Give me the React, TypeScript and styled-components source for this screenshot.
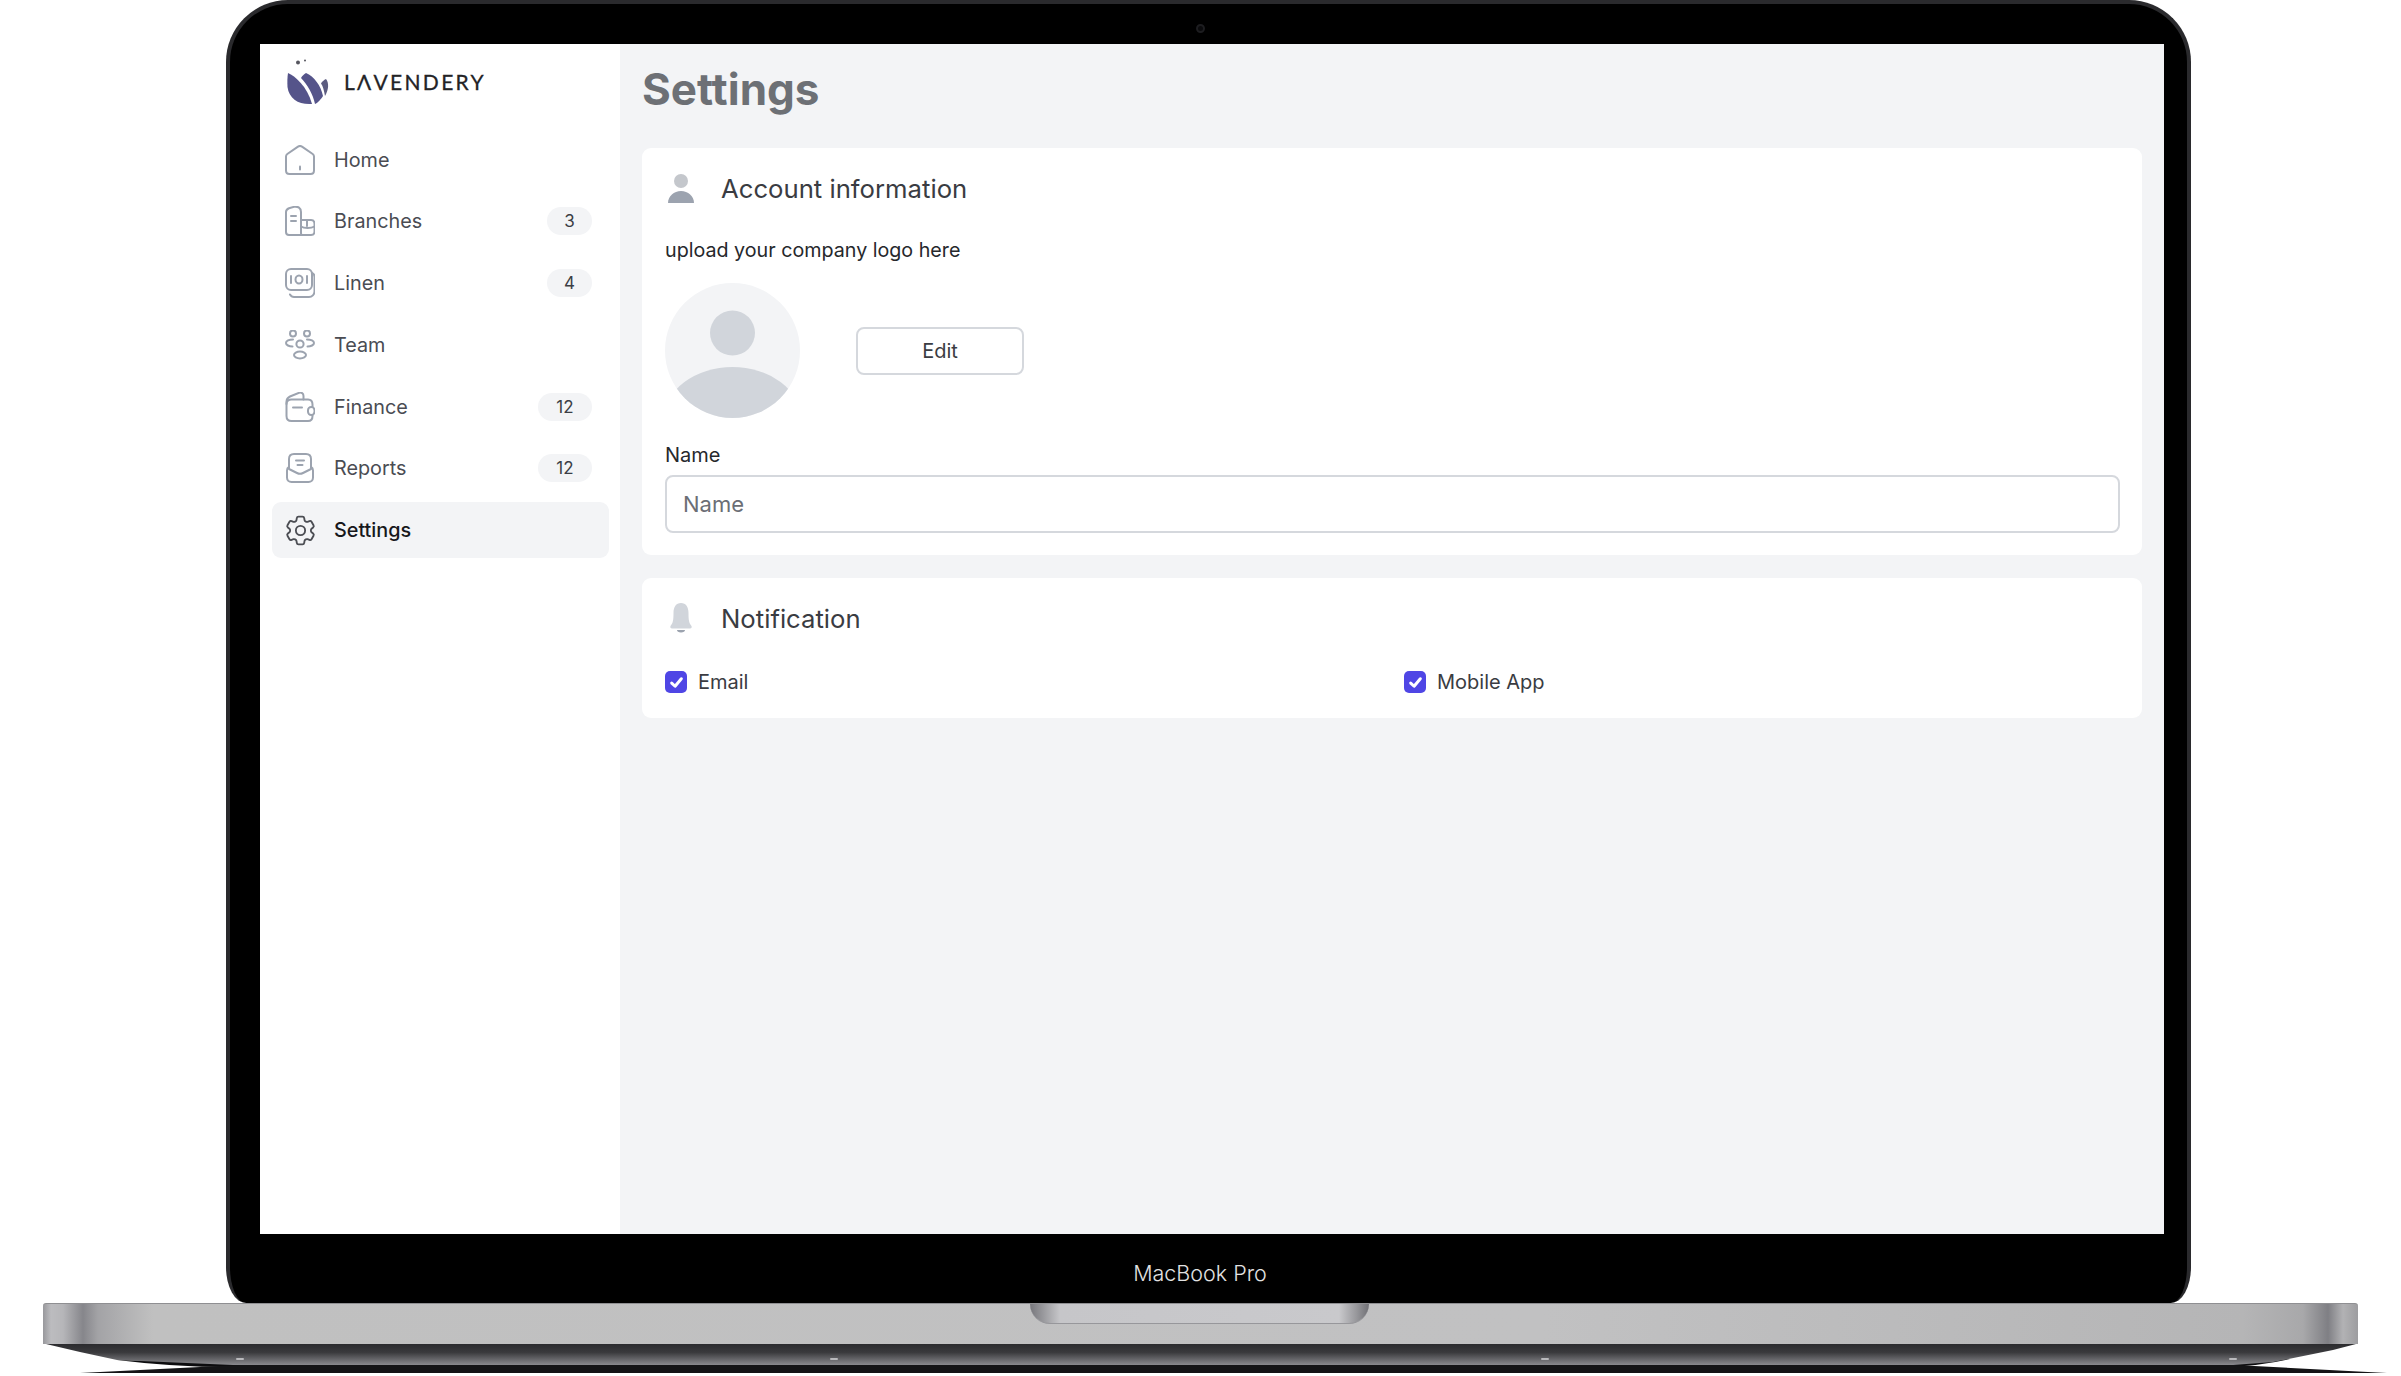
import React from "react";
import styled, { createGlobalStyle } from "styled-components";
import { HiOutlineCog6Tooth } from "react-icons/hi2";

const GlobalStyle = createGlobalStyle`
  html, body {
    margin: 0;
    background: #fff;
    font-family: Inter, "Noto Sans", sans-serif;
  }
  * { box-sizing: border-box; }
`;

const Page = styled.div`
  width: 2401px;
  height: 1376px;
  overflow: hidden;
  background: #fff;
`;

const Lid = styled.div`
  width: 1965px;
  height: 1303px;
  margin-left: 226px;
  padding: 0 23px 0 30px;
  background: #000;
  border: 4px solid #2a2a2d;
  border-bottom: 0;
  border-radius: 62px 62px 20px 20px / 62px 62px 36px 36px;
`;

const TopBezel = styled.div`
  height: 40px;
  padding-right: 24px;
  display: flex;
  align-items: center;
  justify-content: center;
`;

const Camera = styled.div`
  width: 9px;
  height: 9px;
  margin-top: 8px;
  border-radius: 50%;
  background: #0a0a0c;
  border: 2px solid #1d1d20;
`;

const Screen = styled.div`
  height: 1190px;
  display: flex;
  background: #f3f4f6;
`;

const Sidebar = styled.aside`
  width: 360px;
  padding: 0 11px 0 12px;
  background: #fff;
  flex-shrink: 0;
`;

const Brand = styled.div`
  height: 87.5px;
  padding: 14px 0 0 14px;
  display: flex;
  align-items: flex-start;
  gap: 12px;
`;

const Wordmark = styled.span`
  margin-top: 10px;
  font-family: Lato, sans-serif;
  font-size: 21px;
  line-height: 28px;
  letter-spacing: 2.3px;
  -webkit-text-stroke: 0.3px #232326;
  color: #232326;
`;

const Nav = styled.nav`
  display: flex;
  flex-direction: column;
  gap: 5.8px;
`;

const NavItem = styled.a<{ $active?: boolean }>`
  height: 56px;
  padding: 0 17px 0 13px;
  display: flex;
  align-items: center;
  gap: 19px;
  border-radius: 9px;
  font-size: 19.8px;
  font-weight: ${({ $active }) => ($active ? 500 : 400)};
  color: ${({ $active }) => ($active ? "#17181c" : "#4a4c53")};
  background: ${({ $active }) => ($active ? "#f3f4f6" : "transparent")};
`;

const NavIcon = styled.span<{ $active?: boolean }>`
  width: 30px;
  height: 30px;
  flex-shrink: 0;
  color: ${({ $active }) => ($active ? "#4b4d53" : "#9ca3af")};

  svg {
    display: block;
    width: ${({ $active }) => ($active ? "37px" : "30px")};
    height: ${({ $active }) => ($active ? "37px" : "30px")};
    margin: ${({ $active }) => ($active ? "-3.5px" : "0")};
  }
`;

const NavLabel = styled.span`
  flex: 1;
`;

const Badge = styled.span<{ $wide?: boolean }>`
  width: ${({ $wide }) => ($wide ? "54px" : "45px")};
  height: 28px;
  display: flex;
  align-items: center;
  justify-content: center;
  border-radius: 14px;
  background: #f3f4f6;
  color: #3b3e45;
  font-size: 17px;
  font-weight: 400;
`;

const Main = styled.main`
  flex: 1;
  padding: 15px 22px 0;
`;

const Title = styled.h1`
  margin: 0 0 29px;
  font-size: 44px;
  line-height: 60px;
  font-weight: 700;
  color: #6d7075;
`;

const Card = styled.section`
  margin-bottom: 23px;
  padding: 14px 22px 22px 23px;
  background: #fff;
  border-radius: 9px;
`;

const CardHeader = styled.div`
  height: 52px;
  display: flex;
  align-items: center;
  gap: 24px;
  margin-bottom: 22px;
`;

const HeaderIcon = styled.svg`
  width: 30px;
  height: 34px;
  margin-left: 2px;
  flex-shrink: 0;
`;

const CardTitle = styled.h2`
  margin: 0;
  font-size: 25.7px;
  font-weight: 400;
  color: #3a3c42;
`;

const HelpText = styled.p`
  margin: 0 0 19px;
  font-size: 19.7px;
  line-height: 28px;
  font-weight: 400;
  color: #26282c;
`;

const AvatarRow = styled.div`
  display: flex;
  align-items: center;
  gap: 56px;
  margin-bottom: 23px;
`;

const Avatar = styled.svg`
  width: 135px;
  height: 135px;
  display: block;
`;

const EditButton = styled.button`
  width: 168px;
  height: 48px;
  background: #fff;
  border: 2px solid #d5d8dd;
  border-radius: 8px;
  font-family: inherit;
  font-size: 20px;
  font-weight: 400;
  color: #3a3c42;
`;

const FieldLabel = styled.label`
  display: block;
  margin-bottom: 6px;
  font-size: 20px;
  line-height: 28px;
  font-weight: 400;
  color: #26282c;
`;

const TextInput = styled.input`
  display: block;
  width: 100%;
  height: 58px;
  padding: 0 16px;
  background: #fff;
  border: 2px solid #d5d8dd;
  border-radius: 8px;
  outline: none;
  font-family: inherit;
  font-size: 22px;

  &::placeholder {
    color: #6b6e75;
    opacity: 1;
  }
`;

const OptionGrid = styled.div`
  display: grid;
  grid-template-columns: 1fr 1fr;
  column-gap: 23px;
  padding-top: 2px;
`;

const Option = styled.label`
  height: 28px;
  display: flex;
  align-items: center;
  gap: 11px;
  font-size: 20px;
  font-weight: 400;
  color: #3a3c42;
`;

const CheckBox = styled.span`
  width: 22px;
  height: 22px;
  display: flex;
  align-items: center;
  justify-content: center;
  border-radius: 5px;
  background: #4f46e5;

  svg {
    width: 15px;
    height: 15px;
  }
`;

const Chin = styled.div`
  height: 69px;
  padding: 9px 24px 0 0;
  display: flex;
  align-items: center;
  justify-content: center;
  color: #e2e2e2;
  font-size: 21.5px;
  font-weight: 300;
`;

const Base = styled.div`
  position: relative;
  width: 2315px;
  height: 41px;
  margin-left: 43px;
  border-radius: 3px 3px 0 0;
  border-top: 1px solid #8f8f92;
  background: linear-gradient(
    90deg,
    #98989c 0,
    #bcbcbf 8px,
    #b6b6b9 20px,
    #86868b 40px,
    #a3a3a6 55px,
    #c0c0c0 110px,
    #c1c1c2 1500px,
    #b5b5b6 2200px,
    #a8a8aa 2260px,
    #7f7f84 2285px,
    #b2b2b4 2300px,
    #9d9da0 2315px
  );
`;

const Notch = styled.div`
  position: absolute;
  top: 0;
  left: 987px;
  width: 339px;
  height: 20px;
  border-radius: 0 0 24px 24px;
  border-bottom: 1px solid #97979b;
  background: linear-gradient(
    90deg,
    #77777c 0,
    #96969a 12px,
    #c6c6c9 30px,
    #c9c9cc 309px,
    #96969a 327px,
    #707075 339px
  );
`;

const Underside = styled.svg`
  display: block;
  width: 2401px;
  height: 32px;
`;

const navItems = [
  { label: "Home", icon: <HomeIcon /> },
  { label: "Branches", icon: <BranchesIcon />, count: "3" },
  { label: "Linen", icon: <LinenIcon />, count: "4" },
  { label: "Team", icon: <TeamIcon /> },
  { label: "Finance", icon: <FinanceIcon />, count: "12" },
  { label: "Reports", icon: <ReportsIcon />, count: "12" },
];

function LogoMark() {
  return (
    <svg width="46" height="48" viewBox="0 0 46 48">
      <circle cx="12" cy="4.5" r="2" fill="#55555e" />
      <circle cx="19" cy="2.5" r="1" fill="#55555e" />
      <path d="M2 15C9 18 21 28 26 46C13 47 3 41 1.5 29C1.2 24 1.3 20 2 15Z" fill="#55548a" />
      <path d="M20 15C28 18 35 28 37 38C35 41 32 45 29 46C27 36 21 26 15 20C16 18 18 16 20 15Z" fill="#55548a" />
      <path d="M40 21C43 25 43 31 39 38C38 33 37 28 35 25.5C36 23.5 38 22 40 21Z" fill="#5c5c80" />
    </svg>
  );
}

function HomeIcon() {
  return (
    <svg viewBox="0 0 30 30" fill="none" stroke="currentColor" strokeWidth="2" strokeLinejoin="round">
      <path d="M1 11.5C1 10.4 1.5 9.6 2.3 9L13 1.6C14.3 .8 15.7 .8 17 1.6L27.7 9C28.5 9.6 29 10.4 29 11.5V25.5C29 27.5 27.5 29 25.5 29H4.5C2.5 29 1 27.5 1 25.5Z" />
      <path d="M15 21.5V24.5" strokeLinecap="round" />
    </svg>
  );
}

function BranchesIcon() {
  return (
    <svg viewBox="0 0 30 30" fill="none" stroke="currentColor" strokeWidth="2" strokeLinejoin="round" strokeLinecap="round">
      <path d="M17 29H4C2 29 1 28 1 26V6C1 4 2 3 4 2.2L9 .8C13 .2 16 2 16 6V27C16 28 16.5 29 17 29H26C28 29 29.5 27.5 29.5 25.5V18C29.5 15.5 28 14 26 14H16" />
      <path d="M6 10H11M6 15H11M22 14V20M16 20.5C19 22.5 26 22.5 29.5 20.5" />
    </svg>
  );
}

function LinenIcon() {
  return (
    <svg viewBox="0 0 30 30" fill="none" stroke="currentColor" strokeWidth="2" strokeLinecap="round">
      <rect x="1" y="1" width="26" height="21" rx="5" />
      <path d="M5 26.5C5.8 28 7 29 9 29H24C27 29 29.5 26.5 29.5 23.5V9C29.5 7 28.5 5.5 27 5" />
      <path d="M6 8V15M22 8V15" />
      <ellipse cx="14" cy="11.5" rx="3.5" ry="4" />
    </svg>
  );
}

function TeamIcon() {
  return (
    <svg viewBox="0 0 30 30" fill="none" stroke="currentColor" strokeWidth="2">
      <circle cx="8" cy="3.5" r="3" />
      <circle cx="22" cy="3.5" r="3" />
      <circle cx="15" cy="14" r="3.6" />
      <path d="M8 9.5C4 9.5 1 11 1 13C1 15 4 16.5 7.5 16.5M22 9.5C26 9.5 29 11 29 13C29 15 26 16.5 22.5 16.5" strokeLinecap="round" />
      <ellipse cx="15" cy="25" rx="6" ry="3.5" />
    </svg>
  );
}

function FinanceIcon() {
  return (
    <svg viewBox="0 0 30 30" fill="none" stroke="currentColor" strokeWidth="2" strokeLinecap="round" strokeLinejoin="round">
      <path d="M1.5 11V24C1.5 27 3.5 29 6.5 29H23C26 29 27.5 27 27.5 24V23" />
      <path d="M1.5 12C1.5 9 3.5 7.5 6.5 7.5H23C26 7.5 27.5 9.5 27.5 12.5V15" />
      <path d="M1.5 10C1.5 7 3 5.5 5 4.5L14 .8C16.5 0 18.5 1.5 18.5 4V7.5" />
      <path d="M8 15.5H17" />
      <rect x="23" y="15" width="6.5" height="8" rx="3.2" />
    </svg>
  );
}

function ReportsIcon() {
  return (
    <svg viewBox="0 0 30 30" fill="none" stroke="currentColor" strokeWidth="2" strokeLinecap="round" strokeLinejoin="round">
      <path d="M4 14C2.5 14.8 2 16 2 17.5V24.5C2 27.3 4 29 6.5 29H23.5C26 29 28 27.3 28 24.5V17.5C28 16 27.5 14.8 26 14" />
      <path d="M4 16V6C4 3 6 1 9 1H21C24 1 26 3 26 6V16L18 20C16 21 14 21 12 20Z" />
      <path d="M11 7.5H19M12.5 12H17.5" />
    </svg>
  );
}

function CheckMark() {
  return (
    <svg viewBox="0 0 14 14" fill="none" stroke="#fff" strokeWidth="2.8" strokeLinecap="round" strokeLinejoin="round">
      <path d="M2.5 7.5L5.7 10.5L11.5 3.5" />
    </svg>
  );
}

export default function App() {
  return (
    <Page>
      <GlobalStyle />
      <Lid>
        <TopBezel>
          <Camera />
        </TopBezel>
        <Screen>
          <Sidebar>
            <Brand>
              <LogoMark />
              <Wordmark>LΛVENDERY</Wordmark>
            </Brand>
            <Nav>
              {navItems.map((item) => (
                <NavItem key={item.label}>
                  <NavIcon>{item.icon}</NavIcon>
                  <NavLabel>{item.label}</NavLabel>
                  {item.count && <Badge $wide={item.count.length > 1}>{item.count}</Badge>}
                </NavItem>
              ))}
              <NavItem $active>
                <NavIcon $active>
                  <HiOutlineCog6Tooth strokeWidth={1.2} />
                </NavIcon>
                <NavLabel>Settings</NavLabel>
              </NavItem>
            </Nav>
          </Sidebar>
          <Main>
            <Title>Settings</Title>
            <Card>
              <CardHeader>
                <HeaderIcon viewBox="0 0 30 34">
                  <circle cx="14" cy="10" r="7" fill="#c4c7cc" />
                  <path d="M1 32C1 25 7 20 14 20C21 20 27 25 27 32Z" fill="#9ca3af" />
                </HeaderIcon>
                <CardTitle>Account information</CardTitle>
              </CardHeader>
              <HelpText>upload your company logo here</HelpText>
              <AvatarRow>
                <Avatar viewBox="0 0 135 135">
                  <defs>
                    <clipPath id="avatar-clip">
                      <circle cx="67.5" cy="67.5" r="67.5" />
                    </clipPath>
                  </defs>
                  <circle cx="67.5" cy="67.5" r="67.5" fill="#f3f4f6" />
                  <circle cx="67.5" cy="50" r="22.5" fill="#d1d5db" />
                  <ellipse cx="67.5" cy="135" rx="68" ry="51" fill="#d1d5db" clipPath="url(#avatar-clip)" />
                </Avatar>
                <EditButton>Edit</EditButton>
              </AvatarRow>
              <FieldLabel htmlFor="name">Name</FieldLabel>
              <TextInput id="name" placeholder="Name" />
            </Card>
            <Card>
              <CardHeader>
                <HeaderIcon viewBox="0 0 30 34">
                  <path d="M14 2C9 2 6.5 6 6.5 12C6.5 19 6 22 3.5 25C3 26.5 3.5 27.5 5 27.5H23C24.5 27.5 25 26.5 24.5 25C22 22 21.5 19 21.5 12C21.5 6 19 2 14 2Z" fill="#d1d5db" />
                  <path d="M10 29H18C18 30.5 16.5 31.5 14 31.5C11.5 31.5 10 30.5 10 29Z" fill="#9ca3af" />
                </HeaderIcon>
                <CardTitle>Notification</CardTitle>
              </CardHeader>
              <OptionGrid>
                <Option>
                  <CheckBox>
                    <CheckMark />
                  </CheckBox>
                  Email
                </Option>
                <Option>
                  <CheckBox>
                    <CheckMark />
                  </CheckBox>
                  Mobile App
                </Option>
              </OptionGrid>
            </Card>
          </Main>
        </Screen>
        <Chin>MacBook Pro</Chin>
      </Lid>
      <Base>
        <Notch />
      </Base>
      <Underside viewBox="0 0 2401 32">
        <defs>
          <linearGradient id="underside-fade" x1="0" y1="0" x2="0" y2="1">
            <stop offset="0" stopColor="#2b2b2e" />
            <stop offset="0.4" stopColor="#3a3a3d" />
            <stop offset="1" stopColor="#8a8a8e" />
          </linearGradient>
        </defs>
        <path d="M117 16Q180 24 245 23L240 18Z" fill="#0c0c0e" />
        <path d="M2290 15Q2260 22 2225 23L2240 18Z" fill="#0c0c0e" />
        <path d="M80 29L240 21H2235L2387 29Z" fill="#141416" />
        <path d="M43 0H2358L2356 0L2333 6L2273 18L2233 21H233L117 16L80 8L46 0Z" fill="url(#underside-fade)" />
        <rect x="236" y="14" width="8" height="2" rx="1" fill="#b9b9bc" />
        <rect x="830" y="14" width="8" height="2" rx="1" fill="#b9b9bc" />
        <rect x="1541" y="14" width="8" height="2" rx="1" fill="#b9b9bc" />
        <rect x="2229" y="14" width="8" height="2" rx="1" fill="#b9b9bc" />
      </Underside>
    </Page>
  );
}
